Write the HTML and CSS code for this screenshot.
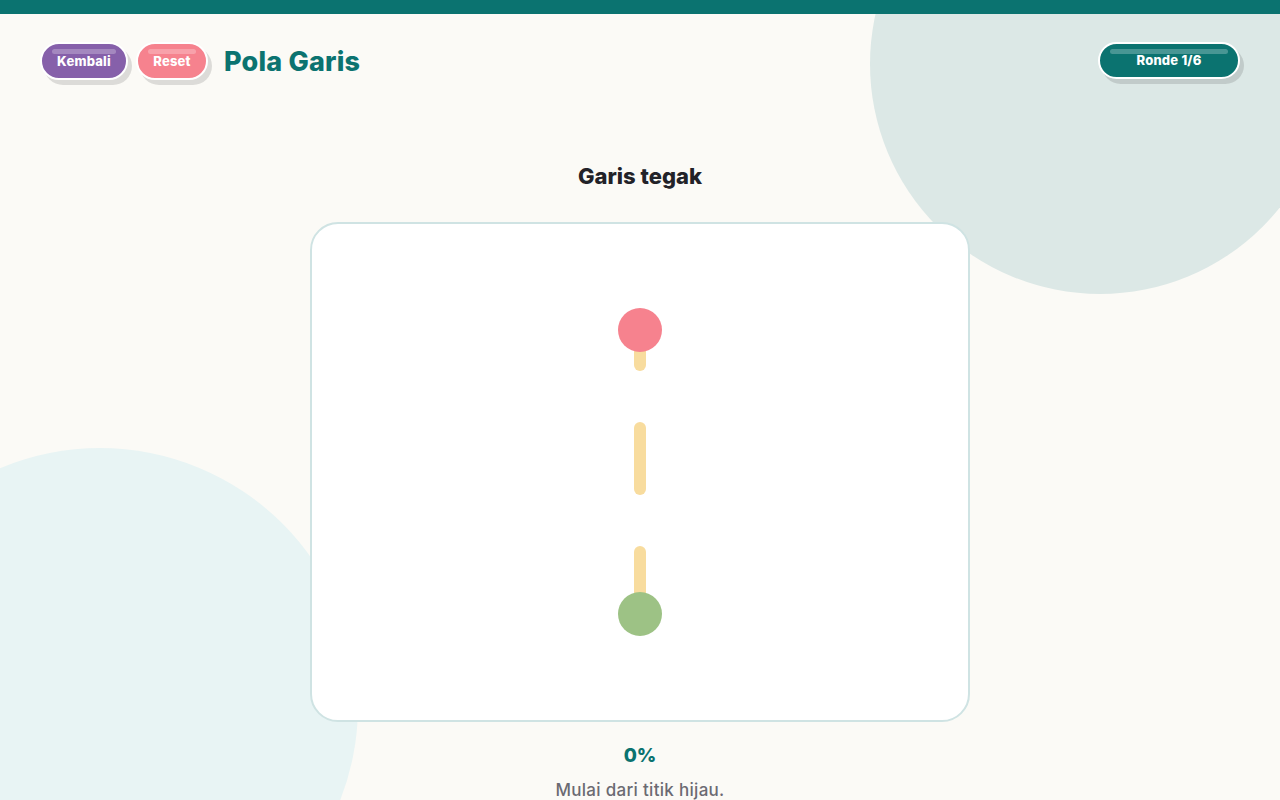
FILE: index.html
```html
<!DOCTYPE html>
<html lang="id">
<head>
    <meta charset="UTF-8">
    <meta name="viewport" content="width=device-width, initial-scale=1.0">
    <title>Pola Garis</title>
    <link rel="stylesheet" href="styles.css">
</head>
<body>
    <div class="bg-blob bg-blob-top"></div>
    <div class="bg-blob bg-blob-bottom"></div>

    <div class="top-bar"></div>

    <header class="header">
        <div class="header-left">
            <button class="pill pill-purple">Kembali</button>
            <button class="pill pill-pink">Reset</button>
            <h1 class="title">Pola Garis</h1>
        </div>
        <div class="pill pill-teal">Ronde 1/6</div>
    </header>

    <main class="game">
        <h2 class="task">Garis tegak</h2>

        <div class="board">
            <svg class="board-svg" viewBox="0 0 660 500" width="660" height="500">
                <g class="guide">
                    <line x1="330" y1="118" x2="330" y2="143"></line>
                    <line x1="330" y1="206" x2="330" y2="267"></line>
                    <line x1="330" y1="330" x2="330" y2="380"></line>
                </g>
                <circle cx="330" cy="108" r="22" fill="#f6828e"></circle>
                <circle cx="330" cy="392" r="22" fill="#9dc285"></circle>
            </svg>
        </div>

        <div class="progress">0%</div>
        <p class="hint">Mulai dari titik hijau.</p>
    </main>
</body>
</html>
```

FILE: styles.css
```css
* {
    margin: 0;
    padding: 0;
    box-sizing: border-box;
}

body {
    position: relative;
    height: 100vh;
    overflow: hidden;
    background: #fbfaf6;
    font-family: "Inter", "Noto Sans", sans-serif;
    color: #222228;
}

.bg-blob {
    position: absolute;
    border-radius: 50%;
    z-index: 0;
}

.bg-blob-top {
    width: 460px;
    height: 460px;
    left: 870px;
    top: -166px;
    background: #dce8e6;
}

.bg-blob-bottom {
    width: 516px;
    height: 516px;
    left: -158px;
    top: 448px;
    background: #e8f4f4;
}

.top-bar {
    position: relative;
    z-index: 1;
    height: 14px;
    background: #0b7370;
}

.header {
    position: relative;
    z-index: 1;
    display: flex;
    justify-content: space-between;
    align-items: center;
    padding: 28px 40px 0;
}

.header-left {
    display: flex;
    align-items: center;
    gap: 8px;
}

.pill {
    position: relative;
    height: 38px;
    padding: 0 12px;
    border: 2px solid #fff;
    border-radius: 19px;
    color: #fff;
    font-family: inherit;
    font-size: 13px;
    font-weight: 800;
    letter-spacing: 0.2px;
    display: flex;
    align-items: center;
    justify-content: center;
    box-shadow: 4px 5px 0 rgba(0, 0, 0, 0.12);
    cursor: pointer;
}

.pill::before {
    content: "";
    position: absolute;
    top: 5px;
    left: 10px;
    right: 10px;
    height: 5px;
    border-radius: 3px;
    background: rgba(255, 255, 255, 0.25);
}

.pill-purple {
    width: 88px;
    background: #8660aa;
}

.pill-pink {
    width: 72px;
    background: #f6828e;
}

.pill-teal {
    width: 142px;
    height: 37px;
    margin-top: -2px;
    background: #0b7370;
}

.title {
    margin-left: 8px;
    font-size: 27px;
    font-weight: 800;
    color: #0b7370;
    letter-spacing: 0.2px;
}

.game {
    position: relative;
    z-index: 1;
    display: flex;
    flex-direction: column;
    align-items: center;
    padding-top: 81px;
}

.task {
    font-size: 22px;
    font-weight: 800;
    line-height: 30px;
}

.board {
    margin-top: 31px;
    width: 660px;
    height: 500px;
    background: #fff;
    border: 2px solid #cfe3e3;
    border-radius: 28px;
    overflow: hidden;
}

.board-svg {
    display: block;
    margin: -2px;
}

.guide line {
    stroke: #f8dc9e;
    stroke-width: 12;
    stroke-linecap: round;
}

.progress {
    margin-top: 22px;
    font-size: 19px;
    font-weight: 800;
    color: #0b7370;
    line-height: 24px;
}

.hint {
    margin-top: 10px;
    font-size: 17px;
    font-weight: 500;
    color: #6b6a72;
    line-height: 24px;
    letter-spacing: 0.3px;
}
```
